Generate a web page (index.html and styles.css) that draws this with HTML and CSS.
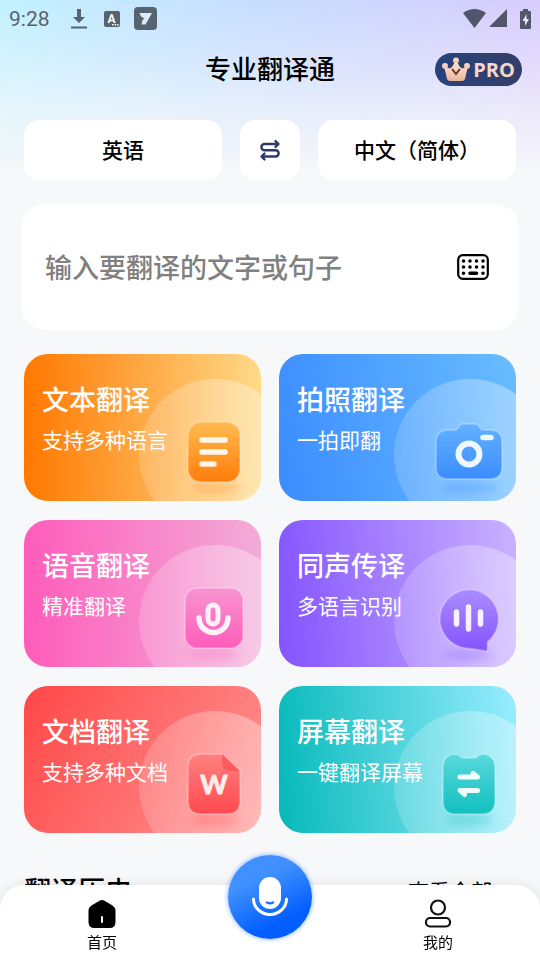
FILE: index.html
```html
<!DOCTYPE html>
<html lang="zh-CN">
<head>
    <meta charset="UTF-8">
    <meta name="viewport" content="width=device-width, initial-scale=1.0">
    <title>专业翻译通</title>
    <link rel="stylesheet" href="styles.css">
</head>
<body>
    <div class="status-bar">
        <span class="clock">9:28</span>
        <svg class="status-download" width="16" height="22" viewBox="0 0 16 22">
            <path d="M6 1h4v8h4l-6 6-6-6h4zM0 18.500h16v2H0z"/>
        </svg>
        <svg class="status-lang" width="16" height="16" viewBox="0 0 16 16">
            <rect width="16" height="16" rx="2"/>
            <text x="7.500" y="12" text-anchor="middle">A</text>
            <path d="M8 13h1.500v1.500H8zM10.500 13H12v1.500h-1.500zM13 13h1.500v1.500H13z" fill="#fff"/>
        </svg>
        <svg width="23" height="23" viewBox="0 0 23 23">
            <rect width="23" height="23" rx="4"/>
            <path d="M5.500 6h12.500l-6.500 11.500H7.500l1-4.500 2-1.500-3.500-2z" fill="#dcebfb"/>
        </svg>
        <div class="status-right">
            <svg width="23" height="19" viewBox="0 0 23 19">
                <path d="M0 4Q11.500-4 23 4L11.500 19z"/>
            </svg>
            <svg width="19" height="19" viewBox="0 0 19 19">
                <path d="M18 0v18H1q-1 0 0-1L17 1z"/>
            </svg>
            <svg class="status-battery" width="11" height="20" viewBox="0 0 11 20">
                <path d="M3 0h5v2h2q1 0 1 1v16q0 1-1 1H1q-1 0-1-1V3q0-1 1-1h2z"/>
                <path d="M6.500 5L2.500 12H5v5l4-7H6.500z" fill="#e8e8fd"/>
            </svg>
        </div>
    </div>

    <header class="header">
        <h1>专业翻译通</h1>
        <button class="pro-btn" type="button">
            <svg width="30" height="25" viewBox="0 0 30 25">
                <defs>
                    <linearGradient id="crown" x1="0" y1="0" x2="0" y2="1">
                        <stop offset="0" stop-color="#ffe1d2"/>
                        <stop offset="1" stop-color="#eab49e"/>
                    </linearGradient>
                </defs>
                <g fill="url(#crown)">
                    <circle cx="15" cy="3.500" r="3"/>
                    <circle cx="4" cy="9" r="3"/>
                    <circle cx="26" cy="9" r="3"/>
                    <path d="M3 9q5 4 8 1l3-5h2l3 5q3 3 8-1l-3 13q-1 2-3 2H9q-2 0-3-2z"/>
                </g>
                <path d="M11 12l4 5 4-5" fill="none" stroke="#5a3a22" stroke-width="2"/>
            </svg>
            <span>PRO</span>
        </button>
    </header>

    <main>
        <div class="languages">
            <button class="lang-btn" type="button">英语</button>
            <button class="swap-btn" type="button" aria-label="交换语言">
                <svg width="22" height="24" viewBox="0 0 22 24">
                    <path d="M19 6H5.500a3 3 0 0 0 0 6.200h11a3 3 0 0 1 0 6.300H3M16.500 3l3 3-3 3M5.500 15.500l-3 3 3 3"/>
                </svg>
            </button>
            <button class="lang-btn" type="button">中文（简体）</button>
        </div>

        <div class="input-card">
            <input type="text" placeholder="输入要翻译的文字或句子" aria-label="输入要翻译的文字或句子">
            <button class="keyboard-btn" type="button" aria-label="键盘">
                <svg width="32" height="26" viewBox="0 0 32 26">
                    <rect x="1.200" y="1.200" width="29.600" height="23.600" rx="4.500" fill="none" stroke="#000" stroke-width="2.200"/>
                    <path class="keys" d="M6.500 7h0M13 7h0M19.500 7h0M26 7h0M6.500 13h0M13 13h0M19.500 13h0M26 13h0M6.500 19.200h0M26 19.200h0M13 19.200h6.500"/>
                </svg>
            </button>
        </div>

        <div class="features">
            <a class="card card-text" href="#">
                <h2>文本翻译</h2>
                <p>支持多种语言</p>
                <svg class="art" viewBox="115 25 122 122">
                    <defs>
                        <linearGradient id="halo" x1="0" y1="0" x2="1" y2="0">
                            <stop offset="0" stop-color="#fff" stop-opacity="0.16"/>
                            <stop offset="1" stop-color="#fff" stop-opacity="0.4"/>
                        </linearGradient>
                        <linearGradient id="orange" x1="0" y1="0" x2="0" y2="1">
                            <stop offset="0" stop-color="#ffbb50"/>
                            <stop offset="1" stop-color="#ff7c0a"/>
                        </linearGradient>
                    </defs>
                    <circle class="halo" cx="191" cy="101" r="76"/>
                    <ellipse class="shade" cx="192" cy="134" rx="24" ry="6" fill="#ff8a1e"/>
                    <rect class="edge" x="164" y="68" width="52" height="60" rx="13" fill="url(#orange)"/>
                    <path class="glyph" d="M178 86h23M178 98h23M178 110h12"/>
                </svg>
            </a>
            <a class="card card-photo" href="#">
                <h2>拍照翻译</h2>
                <p>一拍即翻</p>
                <svg class="art" viewBox="115 25 122 122">
                    <defs>
                        <linearGradient id="blue" x1="0" y1="0" x2="0" y2="1">
                            <stop offset="0" stop-color="#62b1ff"/>
                            <stop offset="1" stop-color="#3b8dff"/>
                        </linearGradient>
                    </defs>
                    <circle class="halo" cx="191" cy="101" r="76"/>
                    <ellipse class="shade" cx="191" cy="134" rx="28" ry="6" fill="#3b8dff"/>
                    <path class="edge" d="M169 76h6q4 0 5-4 1-2 4-2h12q3 0 4 2 1 4 5 4h6q12 0 12 12v25q0 12-12 12h-42q-12 0-12-12V88q0-12 12-12z" fill="url(#blue)"/>
                    <circle cx="190" cy="100" r="10.500" fill="none" stroke="#eff7ff" stroke-width="6"/>
                    <path class="glyph" d="M204 83.500h8"/>
                </svg>
            </a>
            <a class="card card-voice" href="#">
                <h2>语音翻译</h2>
                <p>精准翻译</p>
                <svg class="art" viewBox="115 25 122 122">
                    <defs>
                        <linearGradient id="pink" x1="0" y1="0" x2="0" y2="1">
                            <stop offset="0" stop-color="#f794d0"/>
                            <stop offset="1" stop-color="#ff5cba"/>
                        </linearGradient>
                    </defs>
                    <circle class="halo" cx="191" cy="101" r="76"/>
                    <ellipse class="shade" cx="190" cy="134" rx="26" ry="6" fill="#ff62bd"/>
                    <rect class="edge" x="161" y="68" width="58" height="60" rx="12" fill="url(#pink)"/>
                    <rect x="184" y="85" width="10" height="19" rx="5" fill="none" stroke="#fff0fa" stroke-width="5"/>
                    <path class="glyph" d="M175 98a14.500 14.500 0 0 0 29 0"/>
                </svg>
            </a>
            <a class="card card-live" href="#">
                <h2>同声传译</h2>
                <p>多语言识别</p>
                <svg class="art" viewBox="115 25 122 122">
                    <defs>
                        <linearGradient id="purple" x1="0" y1="0" x2="0" y2="1">
                            <stop offset="0" stop-color="#ab8cff"/>
                            <stop offset="1" stop-color="#8453ff"/>
                        </linearGradient>
                    </defs>
                    <circle class="halo" cx="191" cy="101" r="76"/>
                    <ellipse class="shade" cx="188" cy="135" rx="24" ry="5" fill="#8453ff"/>
                    <path class="edge" d="M190 69.500a29.500 29.500 0 0 1 18.500 52.500v7q0 2.500-2.500 2l-11-2q-6 0-14-2A29.500 29.500 0 0 1 190 69.500z" fill="url(#purple)"/>
                    <path class="glyph" d="M177.500 92v12M189.500 87v22M201.500 92v12"/>
                </svg>
            </a>
            <a class="card card-doc" href="#">
                <h2>文档翻译</h2>
                <p>支持多种文档</p>
                <svg class="art" viewBox="115 25 122 122">
                    <defs>
                        <linearGradient id="red" x1="0" y1="0" x2="0" y2="1">
                            <stop offset="0" stop-color="#ff8080"/>
                            <stop offset="1" stop-color="#ff4a4e"/>
                        </linearGradient>
                    </defs>
                    <circle class="halo" cx="191" cy="101" r="76"/>
                    <ellipse class="shade" cx="190" cy="134" rx="24" ry="6" fill="#ff4a4e"/>
                    <path class="edge" d="M177 68h21l18 17v30q0 13-13 13h-26q-13 0-13-13V81q0-13 13-13z" fill="url(#red)"/>
                    <path d="M198 68v8q0 9 9 9h9z" fill="#fb5a5e"/>
                    <text class="word" x="190" y="108" text-anchor="middle">W</text>
                </svg>
            </a>
            <a class="card card-screen" href="#">
                <h2>屏幕翻译</h2>
                <p>一键翻译屏幕</p>
                <svg class="art" viewBox="115 25 122 122">
                    <defs>
                        <linearGradient id="teal" x1="0" y1="0" x2="0" y2="1">
                            <stop offset="0" stop-color="#58d9dc"/>
                            <stop offset="1" stop-color="#12bfbf"/>
                        </linearGradient>
                    </defs>
                    <circle class="halo" cx="191" cy="101" r="76"/>
                    <ellipse class="shade" cx="190" cy="134" rx="24" ry="6" fill="#12bfbf"/>
                    <path class="edge" d="M175 68q4 0 6 2 1 2 4 2h10q3 0 4-2 2-2 6-2 11 2 11 13v34q0 13-13 13h-27q-12 0-12-13V81q0-11 11-13z" fill="url(#teal)"/>
                    <path class="arrows" d="M181 91h17.500l-4.500-3.500V91M198.500 104.500H181l4.500 4v-4"/>
                </svg>
            </a>
        </div>

        <section class="history">
            <h2>翻译历史</h2>
            <a href="#">查看全部
                <svg width="7" height="12" viewBox="0 0 7 12"><path d="M1 1l5 5-5 5"/></svg>
            </a>
        </section>
    </main>

    <nav class="tab-bar">
        <a class="tab" href="#">
            <svg width="30" height="30" viewBox="0 0 30 30">
                <path d="M12.500 1.800q2.500-1.500 5 0l8 4.700q3 2 3 5V23q0 6-6 6h-15q-6 0-6-6V11.500q0-3 3-5z"/>
                <path d="M15 18v5" stroke="#fff" stroke-width="2" stroke-linecap="round"/>
            </svg>
            首页
        </a>
        <button class="mic-btn" type="button" aria-label="语音输入">
            <svg width="38" height="40" viewBox="0 0 38 40">
                <rect x="8" y="0" width="22" height="32" rx="11" fill="#fff"/>
                <path d="M16 25.500q3 1.500 6 0" stroke="#1c6fff" stroke-width="2.500"/>
                <path d="M2.500 22a16.500 15.500 0 0 0 33 0" stroke="#fff" stroke-width="3"/>
            </svg>
        </button>
        <a class="tab" href="#">
            <svg width="30" height="30" viewBox="0 0 30 30" fill="none" stroke="#111" stroke-width="2.200">
                <circle cx="15" cy="8.500" r="7"/>
                <rect x="3" y="19" width="24" height="8.500" rx="4"/>
            </svg>
            我的
        </a>
    </nav>
</body>
</html>
```
FILE: styles.css
```css
* {
    margin: 0;
    padding: 0;
    box-sizing: border-box;
}

body {
    height: 100vh;
    overflow: hidden;
    display: flex;
    flex-direction: column;
    background: linear-gradient(to bottom, rgba(247, 248, 250, 0), rgba(247, 248, 250, 0.25) 50px, rgba(247, 248, 250, 0.65) 110px, rgba(247, 248, 250, 0.85) 155px, #f7f8fa 170px),
        linear-gradient(to right, #c2f1ff, #c8dcff 50%, #d8ccfd);
    font-family: Roboto, "Noto Sans CJK SC", sans-serif;
    color: #000;
}

button {
    border: none;
    background: none;
    font-family: inherit;
    color: inherit;
    cursor: pointer;
}

a {
    color: inherit;
    text-decoration: none;
}

h1,
h2 {
    font-weight: 500;
}

svg {
    display: block;
    flex: none;
}

/* Status bar */
.status-bar {
    flex: none;
    display: flex;
    align-items: center;
    height: 37px;
    padding: 0 9px;
    color: #56646f;
    fill: #56646f;
}

.clock {
    margin-right: 21px;
    font-size: 21px;
}

.status-download {
    margin-right: 17px;
}

.status-lang {
    margin-right: 14px;
}

.status-lang text {
    font-size: 12px;
    font-weight: 700;
    fill: #fff;
}

.status-right {
    display: flex;
    align-items: center;
    gap: 3px;
    margin-left: auto;
    fill: #51566a;
}

.status-battery {
    margin-left: 9px;
}

/* Header */
.header {
    flex: none;
    display: grid;
    grid-template-columns: 1fr auto 1fr;
    align-items: center;
    height: 65px;
    padding: 0 18px;
}

.header h1 {
    grid-column: 2;
    font-size: 26px;
    line-height: 36px;
}

.pro-btn {
    justify-self: end;
    display: flex;
    align-items: center;
    gap: 2px;
    height: 33px;
    padding: 0 7px 0 6px;
    border-radius: 17px;
    background: linear-gradient(to right, #26427c, #343f68);
}

.pro-btn span {
    font-family: "Open Sans", sans-serif;
    font-size: 20px;
    font-weight: 700;
    color: #f7d6cb;
}

/* Language picker */
.languages {
    display: flex;
    gap: 18px;
    padding: 18px 24px 24px;
}

.lang-btn,
.swap-btn {
    height: 60px;
    border-radius: 15px;
    background: #fff;
}

.lang-btn {
    flex: 1;
    padding-bottom: 3px;
    font-size: 21px;
    font-weight: 500;
}

.swap-btn {
    display: flex;
    align-items: center;
    justify-content: center;
    width: 60px;
}

.swap-btn path {
    fill: none;
    stroke: #2b3a67;
    stroke-width: 2.4;
    stroke-linecap: round;
    stroke-linejoin: round;
}

/* Text input */
.input-card {
    display: flex;
    align-items: center;
    height: 126px;
    margin: 0 21px 24px;
    padding: 0 30px 0 24px;
    border-radius: 24px;
    background: #fff;
}

.input-card input {
    flex: 1;
    min-width: 0;
    height: 60px;
    padding-top: 3px;
    border: none;
    outline: none;
    background: none;
    font-family: inherit;
    font-size: 27px;
    font-weight: 500;
}

.input-card input::placeholder {
    color: #808080;
}

.keys {
    fill: none;
    stroke: #000;
    stroke-width: 3.6;
    stroke-linecap: round;
}

/* Feature cards */
.features {
    display: grid;
    grid-template-columns: 1fr 1fr;
    gap: 19px 18px;
    padding: 0 24px;
}

.card {
    position: relative;
    height: 147px;
    padding: 29px 18px;
    border-radius: 24px;
    overflow: hidden;
    color: #fff;
}

.card h2 {
    margin-bottom: 8px;
    font-size: 27px;
    line-height: 36px;
}

.card p {
    font-size: 21px;
    line-height: 28px;
}

.card h2,
.card p {
    position: relative;
    z-index: 1;
}

.card-text {
    background: linear-gradient(to right, #ff7800, #ffda88);
}

.card-photo {
    background: linear-gradient(80deg, #3b8cff, #68bdff);
}

.card-voice {
    background: linear-gradient(to right, #ff5cba, #f2acd8);
}

.card-live {
    background: linear-gradient(85deg, #8453ff, #cab2ff);
}

.card-doc {
    background: linear-gradient(120deg, #ff4747, #ff9494);
}

.card-screen {
    background: linear-gradient(85deg, #05b9b9, #98edff);
}

.art {
    position: absolute;
    right: 0;
    bottom: 0;
    width: 122px;
    height: 122px;
}

.halo {
    fill: url(#halo);
}

.shade {
    opacity: 0.3;
    filter: blur(4px);
}

.edge {
    stroke: rgba(255, 255, 255, 0.25);
    stroke-width: 2;
}

.glyph {
    fill: none;
    stroke: #fff;
    stroke-opacity: 0.9;
    stroke-width: 5.5;
    stroke-linecap: round;
}

.arrows {
    fill: none;
    stroke: #effdfd;
    stroke-width: 5;
    stroke-linecap: round;
    stroke-linejoin: round;
}

.word {
    font-family: Lato, sans-serif;
    font-size: 26px;
    font-weight: 700;
    fill: #ffecec;
    stroke: #ffecec;
    stroke-width: 1;
    stroke-linejoin: round;
}

/* History */
.history {
    display: flex;
    align-items: center;
    justify-content: space-between;
    margin-top: 38px;
    padding: 0 32px 90px 24px;
}

.history h2 {
    font-size: 27px;
    line-height: 42px;
}

.history a {
    display: flex;
    align-items: center;
    gap: 9px;
    font-size: 21px;
    line-height: 42px;
}

.history path {
    fill: none;
    stroke: #000;
    stroke-width: 1.5;
}

/* Bottom tabs */
.tab-bar {
    position: fixed;
    left: 0;
    right: 0;
    bottom: 0;
    z-index: 2;
    display: flex;
    align-items: flex-start;
    height: 75px;
    border-radius: 24px 24px 0 0;
    background: #fff;
    box-shadow: 0 0 12px rgba(0, 0, 0, 0.1);
}

.tab {
    flex: 1;
    display: flex;
    flex-direction: column;
    align-items: center;
    gap: 3px;
    padding-top: 14px;
    font-size: 15px;
    line-height: 22px;
}

.mic-btn {
    display: flex;
    align-items: center;
    justify-content: center;
    width: 84px;
    height: 84px;
    margin: -30px 24px 0;
    border-radius: 50%;
    background: linear-gradient(155deg, #4091ff 30%, #025eff 75%);
    box-shadow: 0 0 5px rgba(30, 110, 255, 0.6);
}

.mic-btn path {
    fill: none;
    stroke-linecap: round;
}
```
